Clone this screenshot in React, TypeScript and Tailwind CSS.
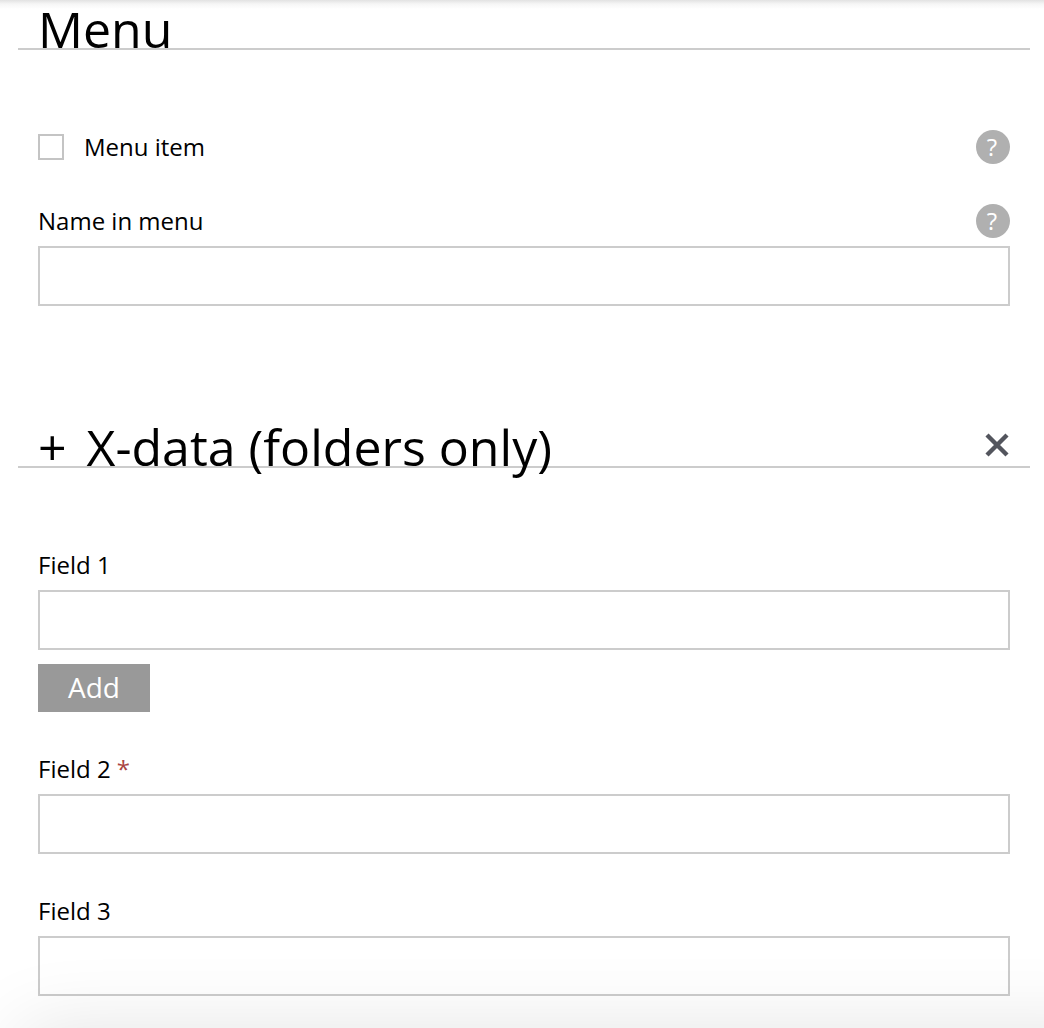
import type { ReactNode } from "react";

function Help() {
  return (
    <span className="flex h-[34px] w-[34px] items-center justify-center rounded-full bg-[#b0b0b0] pr-0.5 text-2xl leading-none text-white">?</span>
  );
}

function Field({ label, required, help, className }: { label: string; required?: boolean; help?: boolean; className: string }) {
  return (
    <label className={"block " + className}>
      <span className="flex h-[42px] items-start justify-between">
        <span className="leading-[34px]">
          {label}
          {required && <span className="text-[#a94442]"> *</span>}
        </span>
        {help && <Help />}
      </span>
      <input className="block h-[60px] w-full rounded-none border-2 border-[#ccc] bg-white px-3 outline-none" />
    </label>
  );
}

function Heading({ children, className }: { children: ReactNode; className: string }) {
  return (
    <header className={"-mx-5 flex border-b-2 border-[#ccc] px-5 text-[50px] " + className}>{children}</header>
  );
}

export default function App() {
  return (
    <main className="relative h-[1028px] overflow-hidden bg-[linear-gradient(to_bottom,#e2e2e2_0px,#f6f6f6_4px,#fff_9px)] pr-[34px] pl-[38px] font-['Open_Sans',sans-serif] text-[24px] text-black">
      <Heading className="h-[50px] leading-[58px]">
        <h2>Menu</h2>
      </Heading>
      <div className="mt-20 flex h-[34px] items-center justify-between">
        <label className="flex items-center gap-5">
          <input type="checkbox" className="h-[26px] w-[26px] appearance-none rounded-none border-2 border-[#c4c4c4] bg-white" />
          <span>Menu item</span>
        </label>
        <Help />
      </div>
      <Field label="Name in menu" help className="mt-10" />
      <Heading className="mt-[94px] h-[68px] leading-[68px]">
        <span className="mt-[13px] mr-[20.5px] w-[28px]">+</span>
        <h2 className="mt-[13px] tracking-[0.01px]">X-data (folders only)</h2>
        <button aria-label="Remove" className="mt-[33px] mr-px ml-auto h-6 w-6">
          <svg viewBox="0 0 24 24" className="h-6 w-6" fill="none" stroke="#53555d" strokeWidth="4.4"><path d="m2 2 20 20M22 2 2 22" /></svg>
        </button>
      </Heading>
      <Field label="Field 1" className="mt-20" />
      <button className="mt-[14px] block h-12 w-28 bg-[#999] text-[28px] leading-[46px] text-white"><span className="block h-12">Add</span></button>
      <Field label="Field 2" required className="mt-10" />
      <Field label="Field 3" className="mt-10" />
      <div className="pointer-events-none absolute top-full -right-20 left-5 h-40 shadow-[0_0_80px_rgba(0,0,0,0.11)]" />
    </main>
  );
}
